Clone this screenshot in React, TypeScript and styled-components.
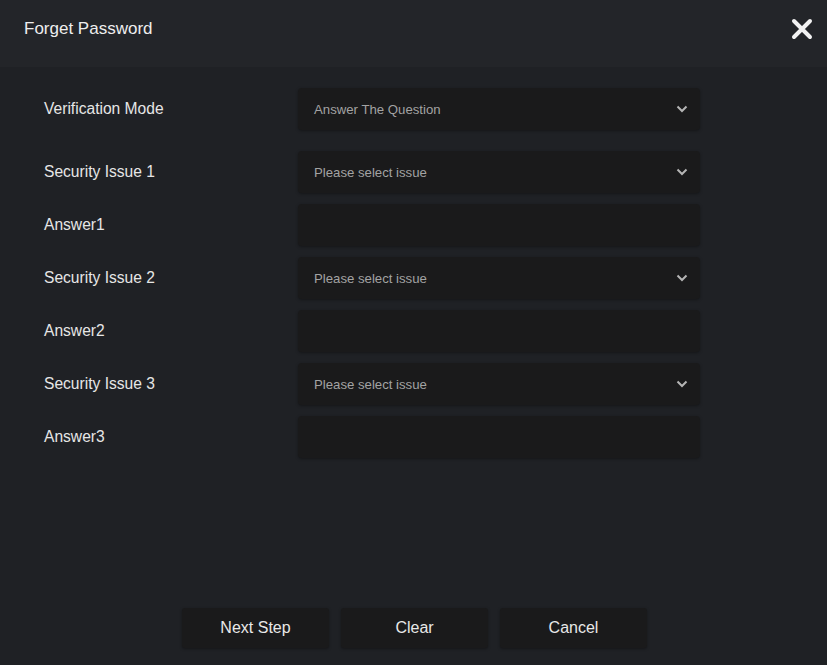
import React from 'react';
import styled, { createGlobalStyle } from 'styled-components';

const GlobalStyle = createGlobalStyle`
  html, body, #root {
    margin: 0;
    padding: 0;
    height: 100%;
  }
  body {
    background: #1f2125;
    font-family: "Liberation Sans", Arial, sans-serif;
  }
`;

const Dialog = styled.div`
  width: 827px;
  height: 665px;
  display: flex;
  flex-direction: column;
  background: #1f2125;
`;

const Header = styled.div`
  height: 67px;
  flex-shrink: 0;
  display: flex;
  align-items: center;
  justify-content: space-between;
  padding: 0 12px 10px 24px;
  box-sizing: border-box;
  background: #232529;
`;

const Title = styled.h1`
  margin: 0;
  font-size: 17px;
  font-weight: normal;
  color: #eeeeee;
`;

const CloseButton = styled.button`
  width: 26px;
  height: 26px;
  padding: 0;
  border: none;
  background: transparent;
  display: flex;
  align-items: center;
  justify-content: center;
  cursor: pointer;
`;

const Form = styled.div`
  flex: 1;
  display: flex;
  flex-direction: column;
  gap: 11px;
  padding: 21px 0 0 44px;
`;

const Row = styled.div<{ $spaced?: boolean }>`
  display: flex;
  align-items: center;
  height: 42px;
  margin-bottom: ${(p) => (p.$spaced ? '10px' : '0')};
`;

const Label = styled.div`
  width: 254px;
  font-size: 15.6px;
  color: #e6e6e6;
`;

const Field = styled.div`
  width: 402px;
  height: 42px;
  box-sizing: border-box;
  display: flex;
  align-items: center;
  justify-content: space-between;
  padding: 0 12px 0 16px;
  background: #1a1a1b;
  border-radius: 4px;
  box-shadow: 0 1px 3px rgba(0, 0, 0, 0.35);
  font-size: 13.2px;
  color: #a3a3a3;
`;

const Footer = styled.div`
  display: flex;
  justify-content: center;
  gap: 12px;
  padding: 0 0 17px 2px;
`;

const Button = styled.button`
  width: 147px;
  height: 40px;
  border: none;
  border-radius: 3px;
  background: #1a1a1b;
  box-shadow: 0 1px 3px rgba(0, 0, 0, 0.35);
  color: #e8e8e8;
  font-family: "Liberation Sans", Arial, sans-serif;
  font-size: 16px;
  cursor: pointer;
`;

const Chevron = () => (
  <svg width="12" height="8" viewBox="0 0 12 8">
    <path d="M1.5 1.5 L6 6 L10.5 1.5" fill="none" stroke="#b5b5b5" strokeWidth="2" />
  </svg>
);

const CloseIcon = () => (
  <svg width="22" height="22" viewBox="0 0 22 22">
    <path d="M3 3 L19 19 M19 3 L3 19" stroke="#f2f2f2" strokeWidth="4" strokeLinecap="round" />
  </svg>
);

type Item = { label: string; value?: string; select: boolean };

const items: Item[] = [
  { label: 'Verification Mode', value: 'Answer The Question', select: true },
  { label: 'Security Issue 1', value: 'Please select issue', select: true },
  { label: 'Answer1', select: false },
  { label: 'Security Issue 2', value: 'Please select issue', select: true },
  { label: 'Answer2', select: false },
  { label: 'Security Issue 3', value: 'Please select issue', select: true },
  { label: 'Answer3', select: false },
];

export default function App() {
  return (
    <>
      <GlobalStyle />
      <Dialog>
        <Header>
          <Title>Forget Password</Title>
          <CloseButton>
            <CloseIcon />
          </CloseButton>
        </Header>
        <Form>
          {items.map((e, i) => (
            <Row key={e.label} $spaced={i === 0}>
              <Label>{e.label}</Label>
              <Field>
                <span>{e.value}</span>
                {e.select && <Chevron />}
              </Field>
            </Row>
          ))}
        </Form>
        <Footer>
          <Button>Next Step</Button>
          <Button>Clear</Button>
          <Button>Cancel</Button>
        </Footer>
      </Dialog>
    </>
  );
}
